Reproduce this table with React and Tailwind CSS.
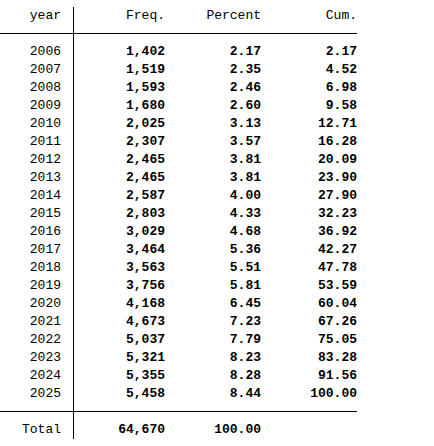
import React from 'react';

const rows = [
  ['2006', '1,402', '2.17', '2.17'],
  ['2007', '1,519', '2.35', '4.52'],
  ['2008', '1,593', '2.46', '6.98'],
  ['2009', '1,680', '2.60', '9.58'],
  ['2010', '2,025', '3.13', '12.71'],
  ['2011', '2,307', '3.57', '16.28'],
  ['2012', '2,465', '3.81', '20.09'],
  ['2013', '2,465', '3.81', '23.90'],
  ['2014', '2,587', '4.00', '27.90'],
  ['2015', '2,803', '4.33', '32.23'],
  ['2016', '3,029', '4.68', '36.92'],
  ['2017', '3,464', '5.36', '42.27'],
  ['2018', '3,563', '5.51', '47.78'],
  ['2019', '3,756', '5.81', '53.59'],
  ['2020', '4,168', '6.45', '60.04'],
  ['2021', '4,673', '7.23', '67.26'],
  ['2022', '5,037', '7.79', '75.05'],
  ['2023', '5,321', '8.23', '83.28'],
  ['2024', '5,355', '8.28', '91.56'],
  ['2025', '5,458', '8.44', '100.00'],
];

function Row({ label, cells, bold = true }) {
  return (
    <div className="flex h-[18px] leading-[18px]">
      <div className="w-[74px] shrink-0 border-r border-black pr-[12px] text-right">{label}</div>
      <div className={`flex ${bold ? 'font-bold' : ''}`}>
        <div className="w-[91px] text-right">{cells[0]}</div>
        <div className="w-[96px] text-right">{cells[1]}</div>
        <div className="w-[96px] text-right">{cells[2]}</div>
      </div>
    </div>
  );
}

function Divider() {
  return (
    <div className="flex h-[18px]">
      <div className="w-[74px] shrink-0 border-r border-black pt-[8px]">
        <div className="h-px bg-black" />
      </div>
      <div className="w-[283px] pt-[8px]">
        <div className="h-px bg-black" />
      </div>
    </div>
  );
}

export default function App() {
  return (
    <div className="w-[434px] h-[446px] bg-white pt-[7px] text-[13px] text-black font-['Liberation_Mono',monospace]">
      <Row label="year" cells={['Freq.', 'Percent', 'Cum.']} bold={false} />
      <Divider />
      {rows.map((r) => (
        <Row key={r[0]} label={r[0]} cells={r.slice(1)} />
      ))}
      <Divider />
      <Row label="Total" cells={['64,670', '100.00', '']} />
    </div>
  );
}
